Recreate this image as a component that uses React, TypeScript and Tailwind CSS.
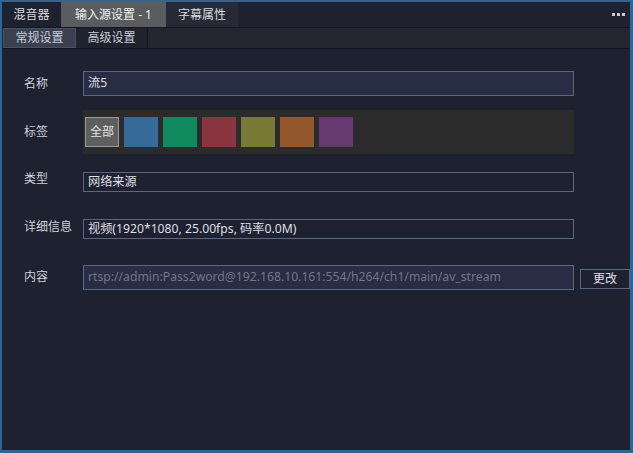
import React from "react";

const font = { fontFamily: '"Noto Sans", "Noto Sans CJK SC", sans-serif' };

function Swatch({ color }: { color: string }) {
  return <div className={`w-[34px] h-[30px] ${color}`} />;
}

export default function App() {
  return (
    <div
      className="w-[633px] h-[453px] bg-[#1e2130] border-t-2 border-l-2 border-r-[3px] border-b-[3px] border-[#2e6597] flex flex-col text-[12px] text-[#d4d6dc] overflow-hidden"
      style={font}
    >
      {/* Top tabs */}
      <div className="h-[26px] flex items-stretch bg-[#1e2130] border-b border-[#14161e]">
        <div className="w-[59px] flex items-center justify-center text-[#dcdcdc]">混音器</div>
        <div className="w-[105px] flex items-center justify-center bg-[#5b5c5f] text-[#f0f0f0]">输入源设置 - 1</div>
        <div className="w-[72px] flex items-center justify-center bg-[#262a37] text-[#dcdcdc]">字幕属性</div>
        <div className="flex-1" />
        <div className="flex items-center gap-[2px] pr-[5px]">
          <span className="w-[3px] h-[3px] bg-[#c9cbd4]" />
          <span className="w-[3px] h-[3px] bg-[#c9cbd4]" />
          <span className="w-[3px] h-[3px] bg-[#c9cbd4]" />
        </div>
      </div>
      {/* Sub tabs */}
      <div className="h-[21px] flex items-stretch bg-[#232631] border-b border-[#14161e] pl-[1px] pr-[1px]">
        <div className="w-[73px] flex items-center justify-center bg-[#3b4051] border border-[#4b5163] text-[#c6cdda]">常规设置</div>
        <div className="w-[72px] flex items-center justify-center bg-[#20232d] border-r border-[#14161e] text-[#c6cdda]">高级设置</div>
        <div className="flex-1" />
      </div>
      {/* Content */}
      <div className="flex flex-col pl-[22px] pt-[22px]">
        <div className="flex items-center h-[25px]">
          <div className="w-[59px] shrink-0 text-[#cdd1da]">名称</div>
          <div className="w-[491px] shrink-0 h-[25px] bg-[#282d43] border border-[#5c6684] flex items-center px-[4px] text-[#dedfe4] text-[12.2px]">流5</div>
        </div>
        <div className="flex items-center h-[44px] mt-[14px]">
          <div className="w-[59px] shrink-0 text-[#cdd1da]">标签</div>
          <div className="w-[491px] shrink-0 h-[44px] bg-[#2b2b2b] flex items-center gap-[5px] pl-[2px]">
            <div className="w-[34px] h-[30px] bg-[#5f5f5f] border border-[#9b9b9b] flex items-center justify-center text-[#e4e4e4]">全部</div>
            <Swatch color="bg-[#376b97]" />
            <Swatch color="bg-[#108a5e]" />
            <Swatch color="bg-[#8a3540]" />
            <Swatch color="bg-[#7a7a37]" />
            <Swatch color="bg-[#94562b]" />
            <Swatch color="bg-[#663a71]" />
          </div>
        </div>
        <div className="flex items-center h-[20px] mt-[18px]">
          <div className="w-[59px] shrink-0 text-[#cdd1da] -mt-[6px]">类型</div>
          <div className="w-[491px] shrink-0 h-[20px] border border-[#5c6684] flex items-center px-[4px] text-[#dedfe4] text-[12.2px]">网络来源</div>
        </div>
        <div className="flex items-center h-[20px] mt-[27px]">
          <div className="w-[59px] shrink-0 text-[#cdd1da] -mt-[4px]">详细信息</div>
          <div className="w-[491px] shrink-0 h-[20px] border border-[#5c6684] flex items-center px-[4px] text-[#dedfe4] whitespace-nowrap text-[12.2px]">视频(1920*1080, 25.00fps, 码率0.0M)</div>
        </div>
        <div className="flex items-start h-[25px] mt-[26px]">
          <div className="w-[59px] shrink-0 text-[#cdd1da] mt-[3px]">内容</div>
          <div className="w-[491px] shrink-0 h-[25px] bg-[#282d43] border border-[#5c6684] flex items-center px-[4px] text-[#717788] whitespace-nowrap overflow-hidden text-[12.2px]">rtsp://admin:Pass2word@192.168.10.161:554/h264/ch1/main/av_stream</div>
          <div className="ml-[6px] mt-[4px] w-[50px] shrink-0 h-[20px] border border-[#5c6684] flex items-center justify-center text-[#dedfe4]">更改</div>
        </div>
      </div>
    </div>
  );
}
